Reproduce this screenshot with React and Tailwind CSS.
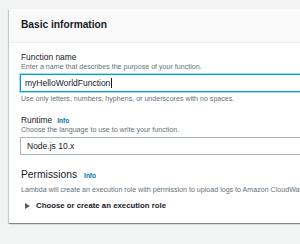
export default function App() {
  const font = { fontFamily: '"Liberation Sans", Arial, sans-serif' };
  return (
    <div className="w-[300px] h-[244px] overflow-hidden bg-[#f2f3f3] pt-[9px] pl-[9px]" style={font}>
      <div className="w-[380px] bg-white shadow-[0_1px_1px_0_rgba(0,28,36,0.3),1px_1px_1px_0_rgba(0,28,36,0.15),-1px_1px_1px_0_rgba(0,28,36,0.15)]">
        <div className="h-[34px] bg-[#fafafa] border-b border-[#eaeded] flex items-center pl-[12px]">
          <span className="text-[10.2px] font-bold text-[#16191f] leading-none">Basic information</span>
        </div>
        <div className="pl-[11px] pt-[9px] pb-[12px]">
          <div className="pl-px text-[8.4px] leading-[11px] text-[#16191f]">Function name</div>
          <div className="pl-px text-[7.1px] leading-[9px] text-[#687078]">Enter a name that describes the purpose of your function.</div>
          <div className="mt-[2px] h-[18px] border border-[#00a1c9] shadow-[0_0_0_1px_rgba(0,161,201,0.35)] flex items-center pl-[4px]">
            <span className="text-[8.5px] leading-none text-[#16191f]">myHelloWorldFunction</span>
            <span className="ml-px w-px h-[10px] bg-[#16191f]" />
          </div>
          <div className="pl-px mt-[2px] text-[7.1px] leading-[10px] text-[#687078]">Use only letters, numbers, hyphens, or underscores with no spaces.</div>
          <div className="pl-px mt-[11px] flex items-baseline gap-[5px] leading-[11px]">
            <span className="text-[8.4px] text-[#16191f]">Runtime</span>
            <span className="text-[6.5px] font-bold text-[#0073bb]">Info</span>
          </div>
          <div className="pl-px text-[7.1px] leading-[9px] text-[#687078]">Choose the language to use to write your function.</div>
          <div className="mt-[2px] h-[18px] border border-[#aab7b8] flex items-center pl-[6px]">
            <span className="text-[8.5px] leading-none text-[#16191f]">Node.js 10.x</span>
          </div>
          <div className="pl-px mt-[13px] flex items-baseline gap-[7px] leading-[13px]">
            <span className="text-[10.3px] text-[#16191f]">Permissions</span>
            <span className="text-[6.5px] font-bold text-[#0073bb]">Info</span>
          </div>
          <div className="pl-px mt-[4px] text-[7.1px] leading-[9px] text-[#687078] whitespace-nowrap">Lambda will create an execution role with permission to upload logs to Amazon CloudWatch Logs.</div>
          <div className="mt-[5px] pl-[5px] flex items-center gap-[6px] leading-[11px]">
            <svg width="5" height="6" viewBox="0 0 5 6" className="shrink-0">
              <path d="M0 0 L5 3 L0 6 Z" fill="#545b64" />
            </svg>
            <span className="text-[7.8px] font-bold text-[#16191f]">Choose or create an execution role</span>
          </div>
        </div>
      </div>
    </div>
  );
}
